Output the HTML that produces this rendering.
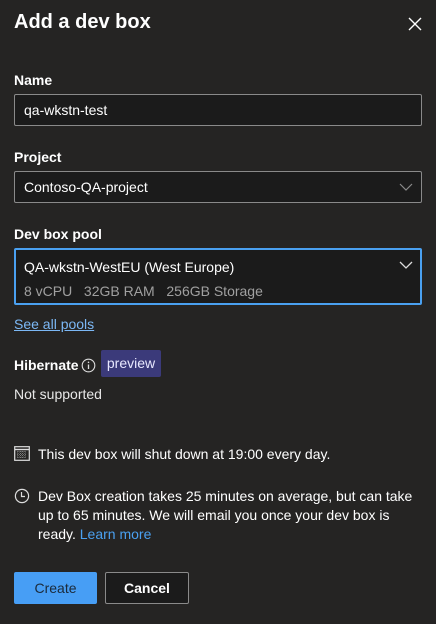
<!DOCTYPE html>
<html><head><style>
*{margin:0;padding:0;box-sizing:border-box}
body{width:436px;height:624px;background:#252423;font-family:"Liberation Sans",sans-serif;color:#fff;position:relative;overflow:hidden;font-size:14px}
.a{position:absolute;white-space:nowrap}
.lbl{font-weight:bold;font-size:14px}
.box{position:absolute;left:14px;width:408px;background:#1b1b1b;border:1px solid #8a8a8a;border-radius:2px}
</style></head><body>
<div class="a" style="left:14px;top:11px;font-size:20px;font-weight:bold">Add a dev box</div>
<svg class="a" style="left:408px;top:17px" width="14" height="14" viewBox="0 0 14 14"><path d="M1 1L13 13M13 1L1 13" stroke="#fff" stroke-width="1.4"/></svg>
<div class="a lbl" style="left:14px;top:72px">Name</div>
<div class="box" style="top:94px;height:32px"><span class="a" style="left:9px;top:7px">qa-wkstn-test</span></div>
<div class="a lbl" style="left:14px;top:149px">Project</div>
<div class="box" style="top:171px;height:32px"><span class="a" style="left:9px;top:7px">Contoso-QA-project</span>
<svg class="a" style="right:8px;top:10px" width="14" height="10"><path d="M1 2L7 8L13 2" stroke="#8a8a8a" fill="none" stroke-width="1.2"/></svg></div>
<div class="a lbl" style="left:14px;top:226px">Dev box pool</div>
<div class="box" style="top:248px;height:57px;border:2px solid #4aa0f0"><span class="a" style="left:8px;top:9px">QA-wkstn-WestEU (West Europe)</span>
<span class="a" style="left:8px;top:33px;color:#a0a0a0">8 vCPU &nbsp; 32GB RAM &nbsp; 256GB Storage</span>
<svg class="a" style="right:7px;top:10px" width="14" height="10"><path d="M1 2L7 8L13 2" stroke="#ddd" fill="none" stroke-width="1.3"/></svg></div>
<div class="a" style="left:14px;top:316px;color:#7cb8f5;text-decoration:underline">See all pools</div>
<div class="a lbl" style="left:14px;top:357px">Hibernate</div>
<svg class="a" style="left:81px;top:358px" width="15" height="15" viewBox="0 0 15 15"><circle cx="7.5" cy="7.5" r="6.3" stroke="#ddd" fill="none" stroke-width="1.1"/><path d="M7.5 6.5V11" stroke="#ddd" stroke-width="1.3"/><circle cx="7.5" cy="4.3" r=".8" fill="#ddd"/></svg>
<div class="a" style="left:101px;top:350px;width:60px;height:27px;background:#3b3a7a;border-radius:2px;text-align:center;line-height:27px;color:#e8e8ff">preview</div>
<div class="a" style="left:14px;top:386px;color:#e8e8e8">Not supported</div>
<svg class="a" style="left:14px;top:446px" width="16" height="15" viewBox="0 0 16 15"><rect x=".7" y=".7" width="14.6" height="13.6" fill="none" stroke="#ddd" stroke-width="1.2"/><path d="M.7 3.5H15.3" stroke="#ddd" stroke-width="1.4"/><path d="M3 6h10M3 8.5h10M3 11h10M4 5v8M6.3 5v8M8.6 5v8M10.9 5v8" stroke="#bbb" stroke-width=".6" stroke-dasharray="1 1"/></svg>
<div class="a" style="left:38px;top:446px">This dev box will shut down at 19:00 every day.</div>
<svg class="a" style="left:14px;top:488px" width="16" height="16" viewBox="0 0 16 16"><circle cx="8" cy="8" r="6.6" fill="none" stroke="#ddd" stroke-width="1.2"/><path d="M7.5 4V8.5H11" fill="none" stroke="#ddd" stroke-width="1.2"/></svg>
<div class="a" style="left:38px;top:487px;line-height:19px">Dev Box creation takes 25 minutes on average, but can take<br>up to 65 minutes. We will email you once your dev box is<br>ready. <span style="color:#4aa0f0">Learn more</span></div>
<div class="a" style="left:14px;top:572px;width:83px;height:32px;background:#479ef5;border-radius:2px;text-align:center;line-height:32px;color:#1b2a3a">Create</div>
<div class="a" style="left:105px;top:572px;width:84px;height:32px;background:#1b1b1b;border:1px solid #8a8a8a;border-radius:2px;text-align:center;line-height:30px;font-weight:bold">Cancel</div>
</body></html>
